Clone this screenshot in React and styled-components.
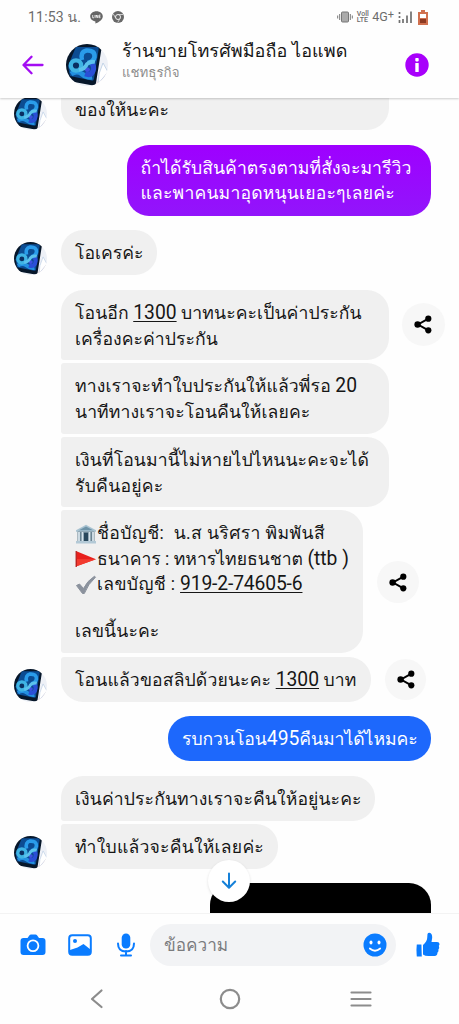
import React from 'react';
import styled, { createGlobalStyle, css } from 'styled-components';

const Global = createGlobalStyle`
  * { box-sizing: border-box; }
  body { margin: 0; background: #fff; }
`;

const Screen = styled.div`
  width: 459px;
  height: 1024px;
  display: flex;
  flex-direction: column;
  overflow: hidden;
  background: #fefefe;
  color: #161616;
  font-family: Roboto, Loma, sans-serif;
`;

const StatusBar = styled.div`
  height: 34px;
  flex: none;
  display: flex;
  align-items: center;
  justify-content: space-between;
  padding: 0 31px 0 28px;
  color: #6c6c6c;
`;

const StatusGroup = styled.div`
  display: flex;
  align-items: center;
  gap: ${(p) => p.$gap}px;
`;

const Clock = styled.span`
  font-size: 14px;
  line-height: 20px;
  letter-spacing: 0.2px;
  white-space: nowrap;
`;

const Network = styled.span`
  font-size: 12.5px;
  line-height: 16px;
  white-space: nowrap;
`;

const Plus = styled.sup`
  font-size: 11px;
  line-height: 0;
  vertical-align: 3px;
`;

const Volte = styled.span`
  display: flex;
  flex-direction: column;
  font-size: 7px;
  font-weight: 500;
  line-height: 6px;
`;

const Header = styled.header`
  height: 64px;
  flex: none;
  display: flex;
  align-items: center;
  padding: 0 30px 2px 22px;
  position: relative;
  z-index: 1;
  box-shadow: 0 1px 2px rgba(0, 0, 0, 0.2);
  clip-path: inset(0 0 -3px 0);
`;

const HeaderAvatar = styled.div`
  display: flex;
  margin: 0 14px 0 22px;
`;

const Titles = styled.div`
  flex: 1;
  display: flex;
  flex-direction: column;
  white-space: nowrap;
  padding-bottom: 10px;
`;

const Title = styled.span`
  font-size: 18px;
  line-height: 26px;
  letter-spacing: 0.1px;
`;

const Subtitle = styled.span`
  font-size: 13.3px;
  line-height: 18px;
  color: #8d8d8d;
`;

const Chat = styled.main`
  height: 815px;
  flex: none;
  overflow: hidden;
  display: flex;
  flex-direction: column;
  position: relative;
`;

const Row = styled.div`
  flex: none;
  display: flex;
  align-items: flex-end;
  justify-content: ${(p) => (p.$mine ? 'flex-end' : 'flex-start')};
  padding: 0 0 0 14px;
  margin-top: ${(p) => p.$top || 0}px;
  ${(p) => p.$mine && css`padding-right: 28px;`}
`;

const AvatarSlot = styled.div`
  width: 47px;
  flex: none;
  display: flex;
`;

const Bubble = styled.div`
  width: ${(p) => p.$w}px;
  height: ${(p) => p.$h}px;
  flex: none;
  padding: ${(p) => (p.$cut ? 0 : 11.3)}px 14px 0;
  border-radius: ${(p) => p.$r || '22px'};
  background: #f0f0f0;
  font-size: 17.6px;
  line-height: 25.3px;
  ${(p) =>
    p.$tone &&
    css`
      color: #fff;
      background: ${p.$tone};
    `}
`;

const Line = styled.div`
  display: flex;
  align-items: baseline;
  height: ${(p) => p.$h || 25.3}px;
  white-space: pre;
  letter-spacing: ${(p) => p.$ls ?? 0.1}px;

  svg {
    align-self: center;
    flex: none;
  }
`;

const Latin = styled.span`
  font-size: 19.3px;
  line-height: 24px;
  letter-spacing: ${(p) => p.$ls || 0}px;
`;

const Linked = styled(Latin)`
  text-decoration: underline;
  text-decoration-thickness: 1px;
  text-underline-offset: 2px;
`;

const ShareButton = styled.button`
  width: ${(p) => p.$s}px;
  height: ${(p) => p.$s}px;
  flex: none;
  margin: 0 0 ${(p) => p.$b}px ${(p) => p.$l}px;
  padding: 0;
  border: 0;
  border-radius: 50%;
  background: #f7f7f7;
  display: flex;
  align-items: center;
  justify-content: center;
`;

const PhotoMessage = styled.div`
  width: 221.5px;
  height: 40px;
  border-radius: 22px 22px 0 0;
  background: #000;
`;

const ScrollDown = styled.button`
  position: absolute;
  left: 208px;
  bottom: 11px;
  width: 42px;
  height: 42px;
  padding: 0;
  border: 0;
  border-radius: 50%;
  background: #fff;
  box-shadow: 0 1px 3px rgba(0, 0, 0, 0.12);
  display: flex;
  align-items: center;
  justify-content: center;
`;

const Composer = styled.footer`
  height: 62px;
  flex: none;
  display: flex;
  align-items: center;
  padding: 0 18px 0 20px;
  border-top: 1px solid #f3f3f3;
`;

const Tools = styled.div`
  display: flex;
  align-items: center;
  gap: 22px;
  width: 130px;
`;

const Input = styled.div`
  width: 246px;
  height: 42px;
  display: flex;
  align-items: center;
  justify-content: space-between;
  padding: 0 9px 0 14px;
  border-radius: 21px;
  background: #f2f3f5;
  color: #7b7c7e;
  font-size: 17.2px;
  line-height: 24px;
  margin-right: 20px;
`;

const NavBar = styled.nav`
  flex: 1;
  display: flex;
  align-items: flex-start;
  justify-content: space-between;
  padding: 13px 87px 0 89px;
`;

const Avatar = ({ size }) => (
  <svg width={size} height={size} viewBox="0 0 42 42">
    <defs>
      <clipPath id={`disc${size}`}><circle cx="21" cy="21" r="21" /></clipPath>
      <linearGradient id={`glow${size}`} x1="0" y1="0" x2="1" y2="1">
        <stop offset="0" stopColor="#0a63a8" />
        <stop offset="0.5" stopColor="#1480d6" />
        <stop offset="1" stopColor="#1058c0" />
      </linearGradient>
    </defs>
    <g clipPath={`url(#disc${size})`}>
      <rect width="42" height="42" fill="#eef1f7" />
      <path d="M28 42 38 28l4 2v12Z" fill="#f1dcdf" />
      <path d="m33 30 4-11 5 9-10 12Z" fill="#fff" stroke="#b8cbe2" strokeWidth=".8" />
      <path d="M6-1h26q4 1 3.600 5L30 39q-.6 3-3 2.500L-3 36V14Z" fill="#07172a" />
      <path d="M10 3h21q2 0 1.700 2L28 35q-.4 2-2.500 1.600L4 32 2 22 9 5Z" fill="#0c4c92" />
      <path d="M5 30q6-4 11 0t10 3" fill="none" stroke="#2390e0" strokeWidth="5" />
      <path d="M25 19q4 3 2 8-2 5-8 3" fill="none" stroke="#2a4fd6" strokeWidth="5" />
      <path d="M16 16q-2-8 4.500-9.500Q29 6 28.500 13q-1 5-7 6" fill="none" stroke="#2a9cea" strokeWidth="4.600" />
      <path d="M19 24q3-2 5 1 0 3-3 3-3-1-2-4Z" fill="#3f50e0" />
      <circle cx="10" cy="21.500" r="5.200" fill="#0a2f62" stroke="#3fb4e4" strokeWidth="4.200" />
      <path d="M13 26q6-1 8-6 3-3 8-2" fill="none" stroke="#5cc2ec" strokeWidth="3.800" />
    </g>
  </svg>
);

const ShareIcon = () => (
  <svg width="18" height="19" viewBox="0 0 18 19">
    <path d="M14 3.800 4 9.500l10 5.700" fill="none" stroke="#000" strokeWidth="2" />
    <circle cx="14.300" cy="3.700" r="3.100" />
    <circle cx="3.600" cy="9.500" r="3.200" />
    <circle cx="14.300" cy="15.300" r="3.100" />
  </svg>
);

const Share = (p) => (
  <ShareButton {...p}><ShareIcon /></ShareButton>
);

const BankIcon = () => (
  <svg width="22" height="20" viewBox="0 0 22 20">
    <path d="M1 6.300 11 .8l10 5.500v1.400H1Z" fill="#a9c3d2" />
    <path d="M4 6.300 11 2.500l7 3.800Z" fill="#6e93a8" />
    <path d="M2.500 7.500h17v10h-17Z" fill="#6a8493" />
    <path d="M9 9h4v9H9Z" fill="#29485c" />
    <path d="M4 8v9.500M7.500 8v9.500M14.500 8v9.500M18 8v9.500" stroke="#d7e4ec" strokeWidth="1.800" />
    <path d="M1 17h20v2.500H1Z" fill="#b3c9d6" />
  </svg>
);

const FlagIcon = () => (
  <svg width="22" height="18" viewBox="0 0 22 18">
    <path d="M1.500 1.300v15L21 9.200Z" fill="#e8201c" />
    <path d="M1.500 9v7.300L21 9.200Z" fill="#f23a2e" />
    <path d="M1.200 1v16" stroke="#b01010" strokeWidth="1.200" />
  </svg>
);

const TickIcon = () => (
  <svg width="22" height="20" viewBox="0 0 22 20">
    <path d="M1.500 10.500 4.500 9l4 4.500Q12 6 19.500 1.200l1 1Q13 9 9.300 18.500H7.500Z" fill="#8b929d" stroke="#8b929d" strokeLinejoin="round" />
  </svg>
);

export default function App() {
  return (
    <>
      <Global />
      <Screen>
        <StatusBar>
          <StatusGroup $gap={9}>
            <Clock>11:53 น.</Clock>
            <svg width="13" height="13" viewBox="0 0 13 13">
              <path d="M6.500.3C3 .3.2 2.500.2 5.400c0 2.500 2.100 4.500 5.200 5v2.200c3.500-1.400 7.400-4.200 7.400-7.200C12.800 2.500 10 .3 6.500.3Z" fill="#666" />
              <path d="M2.700 4v2.800H4M5 4v2.800M6.200 6.800V4l1.600 2.800V4M10.500 4.100H9.100v2.600h1.400M9.100 5.400h1.200" fill="none" stroke="#fff" strokeWidth=".8" />
            </svg>
            <svg width="12" height="12" viewBox="0 0 12 12">
              <circle cx="6" cy="6" r="6" fill="#686868" />
              <path d="M6 3.500h5M3.800 7.200 1.300 3M8.200 7.200 5.700 11.500" stroke="#e4e4e4" strokeWidth=".8" />
              <circle cx="6" cy="6" r="2.500" fill="#686868" stroke="#eee" />
            </svg>
          </StatusGroup>
          <StatusGroup $gap={3.5}>
            <svg width="16" height="12" viewBox="0 0 16 12">
              <rect x="4.500" y="1" width="7" height="10" rx="1" fill="#aaa" stroke="#777" />
              <path d="M.7 4.500v3M2.700 3v6M13.300 3v6M15.300 4.500v3" stroke="#777" />
            </svg>
            <Volte><span>Voll</span><span>LTE</span></Volte>
            <Network>4G<Plus>+</Plus></Network>
            <svg width="14" height="12" viewBox="0 0 14 12">
              <path d="M1.500 1v2M1.500 5v2M1.500 9v3M5 8v4M9 4.500V12M13 .5V12" stroke="#707070" strokeWidth="1.700" />
            </svg>
            <svg width="13" height="15" viewBox="-3 0 13 15">
              <path d="M3 0h4v2h3v13H0V2h3Z" fill="#d0704e" />
              <path d="M2 4h6v4H2Z" fill="#fff" />
              <path d="M2 9h6v4H2Z" fill="#8d3a22" />
            </svg>
          </StatusGroup>
        </StatusBar>

        <Header>
          <svg width="22" height="20" viewBox="0 0 22 20">
            <path d="M20.500 10H2M9.500 1.800 1.500 10l8 8.200" fill="none" stroke="#a30df2" strokeWidth="2.300" strokeLinecap="round" strokeLinejoin="round" />
          </svg>
          <HeaderAvatar><Avatar size={42} /></HeaderAvatar>
          <Titles>
            <Title>ร้านขายโทรศัพมือถือ ไอแพด</Title>
            <Subtitle>แชทธุรกิจ</Subtitle>
          </Titles>
          <svg width="24" height="24" viewBox="0 0 24 24">
            <circle cx="12" cy="12" r="11.700" fill="#a800fb" />
            <rect x="10.300" y="5" width="3.400" height="3.400" rx=".8" fill="#fff" />
            <rect x="10.300" y="10" width="3.400" height="9" rx=".5" fill="#fff" />
          </svg>
        </Header>

        <Chat>
          <Row $top={-1}>
            <AvatarSlot><Avatar size={33} /></AvatarSlot>
            <Bubble $cut $w={328} $h={32} $r="0 0 22px 22px">
              <Line $h={22} $ls={0}>ของให้นะคะ</Line>
            </Bubble>
          </Row>
          <Row $mine $top={14.5}>
            <Bubble $w={304.5} $h={71} $tone="linear-gradient(#9e00ff, #9215fb)">
              <Line $ls={0.05}>ถ้าได้รับสินค้าตรงตามที่สั่งจะมารีวิว</Line>
              <Line $ls={0.18}>และพาคนมาอุดหนุนเยอะๆเลยค่ะ</Line>
            </Bubble>
          </Row>
          <Row $top={14.5}>
            <AvatarSlot><Avatar size={33} /></AvatarSlot>
            <Bubble $w={96} $h={45}><Line $ls={0}>โอเครค่ะ</Line></Bubble>
          </Row>
          <Row $top={15}>
            <AvatarSlot />
            <Bubble $w={328} $h={70} $r="22px 22px 22px 3px">
              <Line>โอนอีก <Linked>1300</Linked> บาทนะคะเป็นค่าประกัน</Line>
              <Line $ls={0.05}>เครื่องคะค่าประกัน</Line>
            </Bubble>
            <Share $s={43} $l={12.5} $b={14} />
          </Row>
          <Row $top={3}>
            <AvatarSlot />
            <Bubble $w={328} $h={71} $r="3px 22px 22px 3px">
              <Line $ls={0.12}>ทางเราจะทำใบประกันให้แล้วพี่รอ <Latin>20</Latin></Line>
              <Line>นาทีทางเราจะโอนคืนให้เลยคะ</Line>
            </Bubble>
          </Row>
          <Row $top={3}>
            <AvatarSlot />
            <Bubble $w={328} $h={70} $r="3px 22px 22px 3px">
              <Line>เงินที่โอนมานี้ไม่หายไปไหนนะคะจะได้</Line>
              <Line $ls={0.25}>รับคืนอยู่คะ</Line>
            </Bubble>
          </Row>
          <Row $top={3}>
            <AvatarSlot />
            <Bubble $w={302} $h={143} $r="3px 22px 22px 3px">
              <Line $ls={0.38}><BankIcon />ชื่อบัญชี:  น.ส นริศรา พิมพันสี</Line>
              <Line $ls={0}><FlagIcon />ธนาคาร : ทหารไทยธนชาต <Latin>(ttb )</Latin></Line>
              <Line $ls={0.35}><TickIcon />เลขบัญชี : <Linked $ls={-0.15}>919-2-74605-6</Linked></Line>
              <Line $h={22} />
              <Line>เลขนี้นะคะ</Line>
            </Bubble>
            <Share $s={42} $l={14} $b={50} />
          </Row>
          <Row $top={4}>
            <AvatarSlot><Avatar size={33} /></AvatarSlot>
            <Bubble $w={310} $h={45} $r="3px 22px 22px 22px">
              <Line $ls={0.14}>โอนแล้วขอสลิปด้วยนะคะ <Linked>1300</Linked> บาท</Line>
            </Bubble>
            <Share $s={41} $l={14} $b={2} />
          </Row>
          <Row $mine $top={14}>
            <Bubble $w={263} $h={45} $tone="#1d68fc">
              <Line $ls={-0.05}>รบกวนโอน<Latin>495</Latin>คืนมาได้ไหมคะ</Line>
            </Bubble>
          </Row>
          <Row $top={15}>
            <AvatarSlot />
            <Bubble $w={314} $h={45} $r="22px 22px 22px 3px">
              <Line>เงินค่าประกันทางเราจะคืนให้อยู่นะคะ</Line>
            </Bubble>
          </Row>
          <Row $top={3}>
            <AvatarSlot><Avatar size={33} /></AvatarSlot>
            <Bubble $w={217} $h={45} $r="3px 22px 22px 22px">
              <Line $ls={0.22}>ทำใบแล้วจะคืนให้เลยค่ะ</Line>
            </Bubble>
          </Row>
          <Row $mine $top={14}><PhotoMessage /></Row>
          <ScrollDown>
            <svg width="16" height="18" viewBox="0 0 16 18">
              <path d="M8 1.500v14M1.800 9.500 8 15.700l6.200-6.200" fill="none" stroke="#1580d8" strokeWidth="2" strokeLinecap="round" strokeLinejoin="round" />
            </svg>
          </ScrollDown>
        </Chat>

        <Composer>
          <Tools>
            <svg width="26" height="22" viewBox="0 0 26 22">
              <path d="M3.500 4h4l2-2.800Q10 .5 11 .5h4.500q1 0 1.500.7L19 4h3.500Q25.500 4 25.500 7v11q0 3-3 3h-19q-3 0-3-3V7q0-3 3-3Z" fill="#0a7cff" />
              <circle cx="13" cy="11.700" r="5.400" fill="none" stroke="#fff" strokeWidth="1.800" />
            </svg>
            <svg width="24" height="22" viewBox="0 0 24 22">
              <rect x="1.200" y="1.200" width="21.600" height="19.600" rx="3" fill="#fff" stroke="#0a7cff" strokeWidth="2" />
              <circle cx="7" cy="7" r="2" fill="#0a7cff" />
              <path d="M2 16 9.500 13.500l6-3.500 7 5.500V20H2Z" fill="#0a7cff" />
            </svg>
            <svg width="24" height="24" viewBox="-2 0 24 24">
              <rect x="5.700" y=".5" width="8.600" height="15" rx="4.300" fill="#0a7cff" />
              <path d="M2 10.500q0 8 8 8t8-8M10 18v4M5 22.500h10" fill="none" stroke="#0a7cff" strokeWidth="2" strokeLinecap="round" />
            </svg>
          </Tools>
          <Input>
            <span>ข้อความ</span>
            <svg width="24" height="24" viewBox="0 0 24 24">
              <circle cx="12" cy="12" r="11.500" fill="#0a7cff" />
              <ellipse cx="8" cy="9.500" rx="1.500" ry="2" fill="#fff" />
              <ellipse cx="16" cy="9.500" rx="1.500" ry="2" fill="#fff" />
              <path d="M6.800 15.500q5.200 4.500 10.400 0" fill="none" stroke="#fff" strokeWidth="1.700" strokeLinecap="round" />
            </svg>
          </Input>
          <svg width="24" height="26" viewBox="0 0 24 26">
            <path d="M.8 12.500h4.600l.4 12H.8Q0 18 .8 12.500Z" fill="#0a7cff" />
            <path d="M7 13q4-3.500 4.200-7L11.500 2Q12 .7 13.500.8q2.800.4 2.700 5L15.500 10h5.500q2.500.2 2.500 2 0 1-.7 1.800 1 2.200-.4 3.700.6 2-1 3.300.2 3-2.900 3.200h-6Q9 24 7 22.500Z" fill="#0a7cff" />
          </svg>
        </Composer>

        <NavBar>
          <svg width="15" height="22" viewBox="0 0 15 22">
            <path d="M12.500 2.500 3 11l9.500 8" fill="none" stroke="#8c8c8c" strokeWidth="2.200" strokeLinecap="round" strokeLinejoin="round" />
          </svg>
          <svg width="27" height="22" viewBox="-5 0 27 22">
            <circle cx="11" cy="11" r="9.200" fill="none" stroke="#8c8c8c" strokeWidth="2.200" />
          </svg>
          <svg width="22" height="22" viewBox="0 0 22 22">
            <path d="M1.500 4.500h19M1.500 11h19M1.500 17.500h19" stroke="#8c8c8c" strokeWidth="2.200" strokeLinecap="round" />
          </svg>
        </NavBar>
      </Screen>
    </>
  );
}
